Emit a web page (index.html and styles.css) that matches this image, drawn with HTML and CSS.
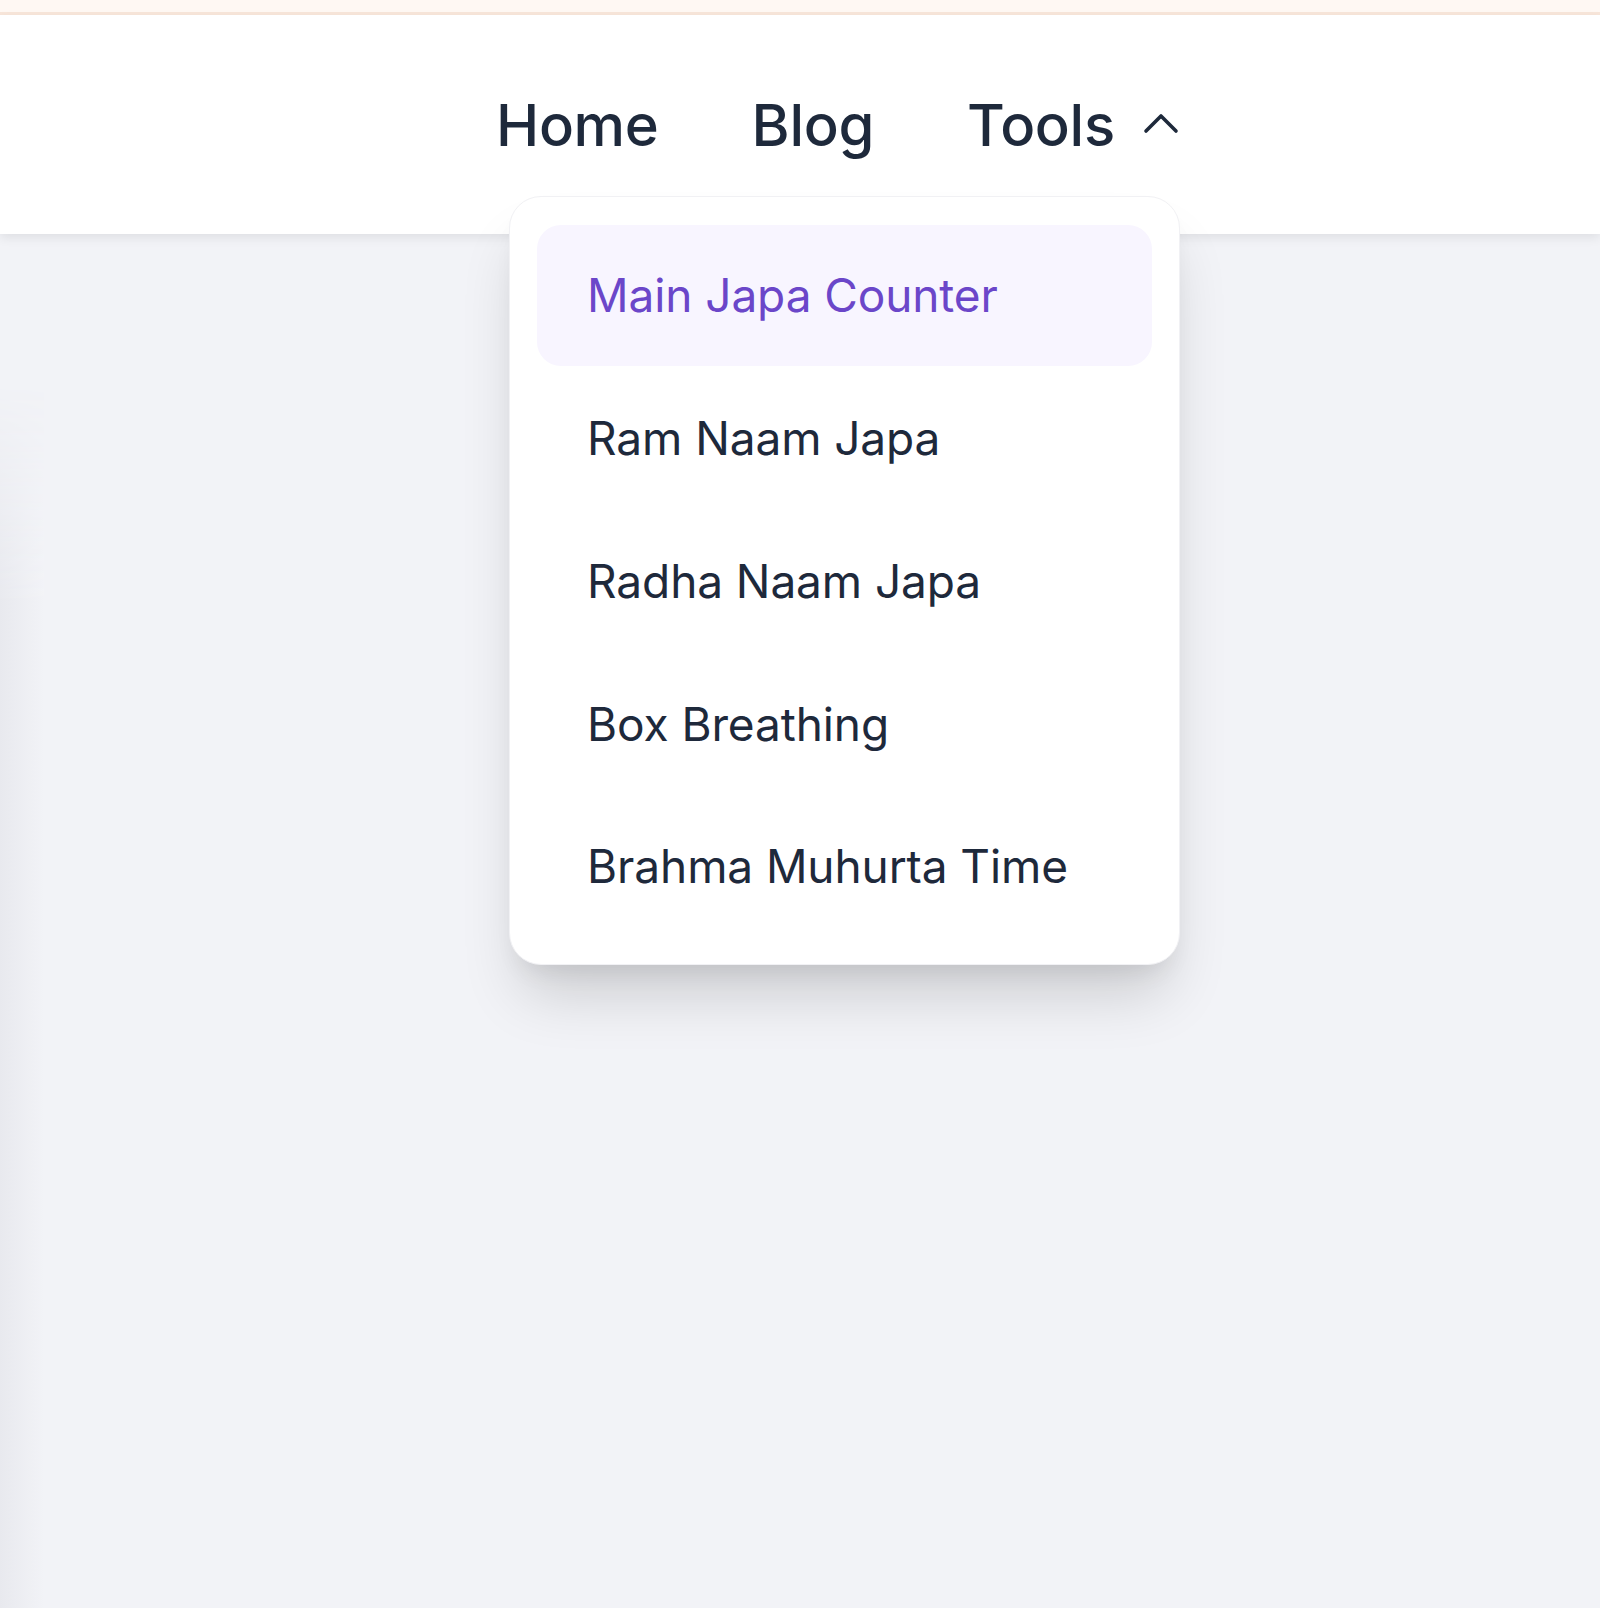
FILE: index.html
```html
<!DOCTYPE html>
<html lang="en">
<head>
    <meta charset="UTF-8">
    <meta name="viewport" content="width=device-width, initial-scale=1.0">
    <title>Japa Tools</title>
    <link rel="stylesheet" href="styles.css">
</head>
<body>
    <div class="topbar"></div>

    <!-- Header -->
    <header class="header">
        <nav class="nav">
            <a href="#" class="nav-link">Home</a>
            <a href="#" class="nav-link">Blog</a>
            <div class="nav-tools">
                <button class="nav-link tools-btn">
                    Tools
                    <svg class="chevron" viewBox="0 0 36 24" width="36" height="24">
                        <polyline points="3,20 18,5 33,20" fill="none" stroke="#1e293b" stroke-width="3.6" stroke-linecap="round" stroke-linejoin="round"/>
                    </svg>
                </button>

                <!-- Dropdown -->
                <div class="dropdown">
                    <a href="#" class="dropdown-item active">Main Japa Counter</a>
                    <a href="#" class="dropdown-item">Ram Naam Japa</a>
                    <a href="#" class="dropdown-item">Radha Naam Japa</a>
                    <a href="#" class="dropdown-item">Box Breathing</a>
                    <a href="#" class="dropdown-item">Brahma Muhurta Time</a>
                </div>
            </div>
        </nav>
    </header>

    <main class="page">
        <div class="edge"></div>
    </main>
</body>
</html>
```

FILE: styles.css
```css
/* General Styling */
body {
    font-family: 'Inter', 'Noto Sans', sans-serif;
    background: #f2f3f7;
    margin: 0;
    padding: 0;
    min-height: 100vh;
    display: flex;
    flex-direction: column;
    color: #1e293b;
}

/* Top strip */
.topbar {
    height: 12px;
    background: #fff8f3;
    border-bottom: 3px solid #f8e6da;
}

/* Header */
.header {
    background: white;
    height: 219px;
    display: flex;
    align-items: center;
    position: relative;
    z-index: 10;
    box-shadow: 0 4px 10px rgba(0, 0, 0, 0.08);
}

.nav {
    display: flex;
    align-items: center;
    gap: 93px;
    padding-left: 496px;
}

.nav-link {
    font-family: inherit;
    font-size: 58px;
    font-weight: 500;
    color: #1e293b;
    text-decoration: none;
    line-height: 1;
    letter-spacing: -0.3px;
}

.nav-tools {
    position: relative;
}

.tools-btn {
    background: none;
    border: none;
    padding: 0;
    display: flex;
    align-items: center;
    gap: 28px;
    cursor: pointer;
}

.chevron {
    display: block;
    margin-top: -4px;
}

/* Dropdown */
.dropdown {
    position: absolute;
    top: 100px;
    left: -458px;
    width: 671px;
    box-sizing: border-box;
    padding: 28px 27px 27px;
    background: white;
    border: 1px solid #f1f1f4;
    border-radius: 32px;
    box-shadow: 0 40px 60px -12px rgba(0, 0, 0, 0.16), 0 16px 24px -10px rgba(0, 0, 0, 0.08);
    display: flex;
    flex-direction: column;
}

.dropdown-item {
    height: 142.6px;
    display: flex;
    align-items: center;
    padding-left: 50px;
    border-radius: 24px;
    font-size: 46px;
    font-weight: 400;
    color: #1e293b;
    text-decoration: none;
    letter-spacing: -0.1px;
}

.dropdown-item.active {
    height: 141px;
    margin-bottom: 1.6px;
    background: #f8f5ff;
    color: #6b46c9;
}

/* Page body */
.page {
    flex: 1;
    display: flex;
}

.edge {
    width: 44px;
    margin-top: 150px;
    background: linear-gradient(to right, #e8e9ee, #f2f3f7);
    -webkit-mask-image: linear-gradient(to bottom, transparent, black 220px);
    mask-image: linear-gradient(to bottom, transparent, black 220px);
}
```
